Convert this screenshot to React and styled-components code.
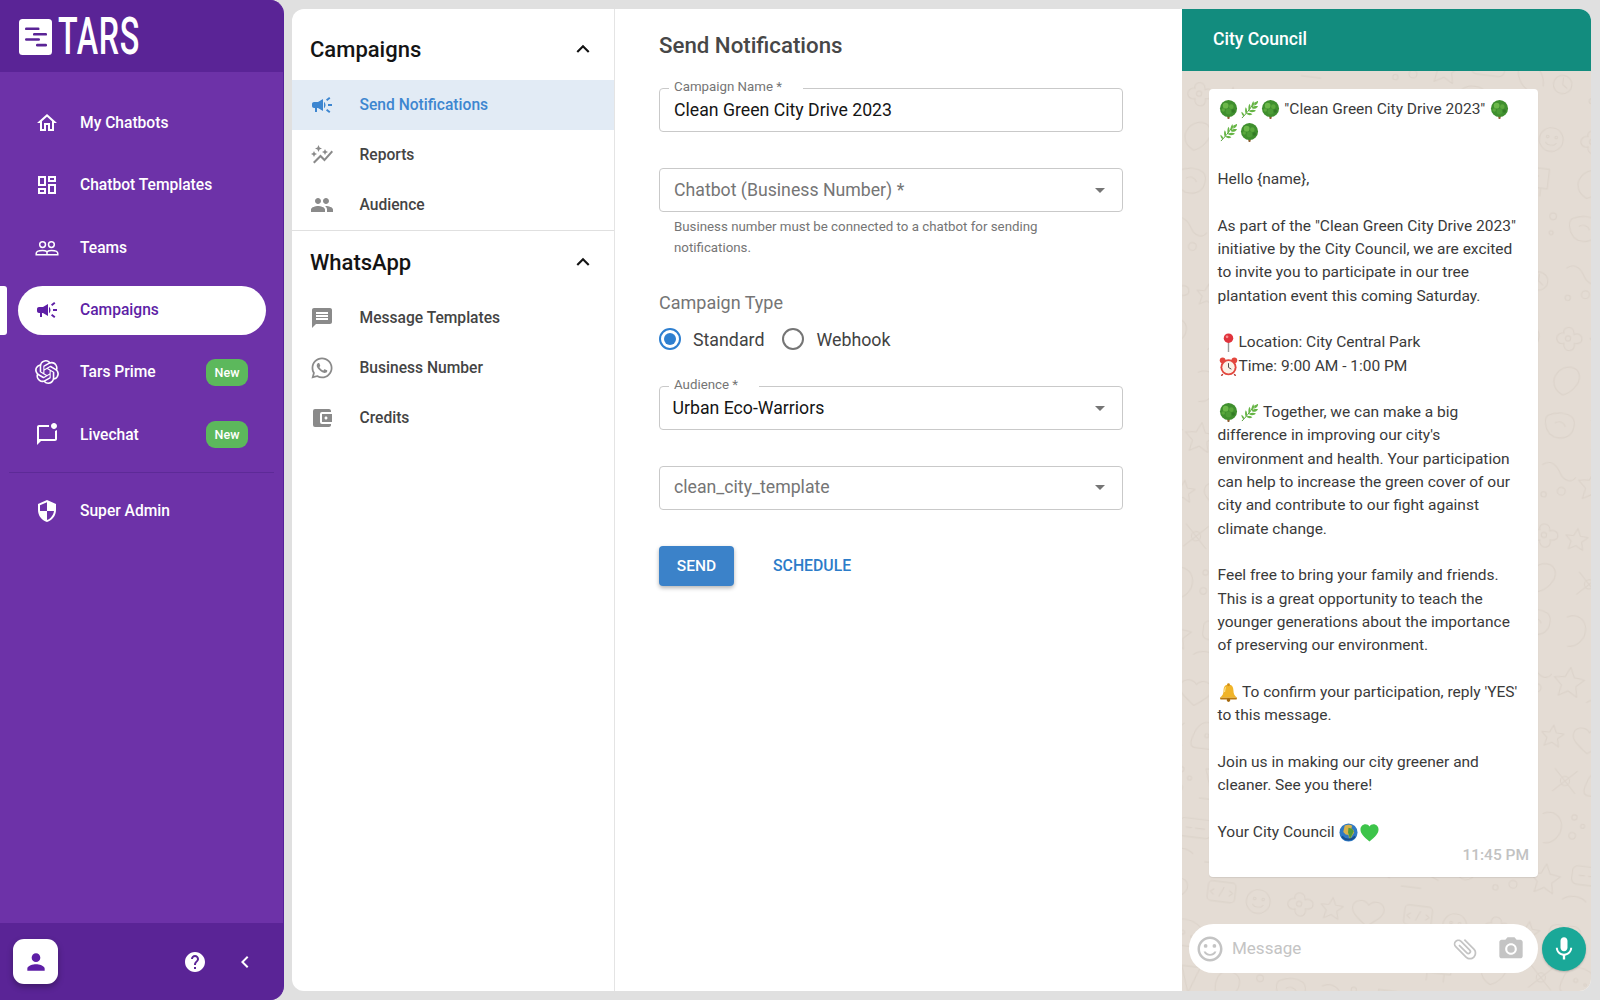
import React from "react";
import styled, { createGlobalStyle } from "styled-components";
import {
  MdOutlineHome, MdOutlineDashboard, MdCampaign, MdOutlineMarkChatUnread, MdSecurity,
  MdPerson, MdHelp, MdChevronLeft, MdAutoGraph, MdPeople, MdMessage,
  MdAccountBalanceWallet, MdExpandLess, MdArrowDropDown, MdOutlineSentimentSatisfiedAlt,
  MdAttachFile, MdPhotoCamera, MdMic,
} from "react-icons/md";
import { SiOpenai } from "react-icons/si";
import { FaWhatsapp } from "react-icons/fa";

const Global = createGlobalStyle`
  html, body { margin: 0; padding: 0; background: #e0e0e0; }
  body { font-family: Roboto, "Liberation Sans", sans-serif; overflow: hidden; }
  * { box-sizing: border-box; }
`;

const Page = styled.div`
  display: flex;
  width: 1600px;
  height: 1000px;
  background: #e0e0e0;
`;

/* ---------- Left sidebar ---------- */
const Sidebar = styled.aside`
  width: 284px;
  flex: none;
  display: flex;
  flex-direction: column;
  background: #6d32a8;
  border-right: 1px solid #56209a;
  border-radius: 0 14px 14px 0;
  overflow: hidden;
`;
const LogoBar = styled.div`
  height: 72px;
  flex: none;
  background: #5a2496;
  display: flex;
  align-items: center;
  padding: 1px 0 0 19px;
  gap: 6px;
`;
const LogoWord = styled.span`
  display: inline-block;
  color: #fff;
  font-size: 52px;
  font-weight: 500;
  line-height: 71px;
  letter-spacing: 1px;
  transform: scaleX(0.62);
  transform-origin: left center;
`;
const Nav = styled.nav`
  flex: 1;
  display: flex;
  flex-direction: column;
  gap: 13.3px;
  padding-top: 26.7px;
`;
const NavRow = styled.a`
  position: relative;
  display: flex;
  align-items: center;
  flex: none;
  height: 49px;
  width: 248px;
  margin-left: 18px;
  padding: 0 18px 0 17px;
  gap: 21px;
  border-radius: 25px;
  font-size: 15.6px;
  font-weight: 500;
  color: ${(p) => (p.$active ? "#5e1fa6" : "#fff")};
  background: ${(p) => (p.$active ? "#fff" : "transparent")};
  svg { flex: none; }
`;
const ActiveMark = styled.span`
  position: absolute;
  left: -18px;
  top: 0;
  width: 7px;
  height: 49px;
  background: #fff;
  border-radius: 0 3px 3px 0;
`;
const NewBadge = styled.span`
  margin-left: auto;
  width: 42px;
  height: 27px;
  border-radius: 9px;
  background: #5cb85c;
  color: #fff;
  font-size: 12.5px;
  font-weight: 500;
  display: flex;
  align-items: center;
  justify-content: center;
`;
const NavDivider = styled.hr`
  width: 265px;
  margin: 0 0 0 9px;
  border: 0;
  border-top: 1px solid #5d2a97;
`;
const SideFooter = styled.div`
  height: 77px;
  flex: none;
  background: #5a2496;
  display: flex;
  align-items: center;
  padding: 0 26px 0 13px;
`;
const AvatarButton = styled.div`
  width: 45px;
  height: 45px;
  border-radius: 11px;
  background: #fff;
  color: #5e1fa6;
  display: flex;
  align-items: center;
  justify-content: center;
  box-shadow: 0 3px 6px rgba(0, 0, 0, 0.3);
  margin-right: auto;
`;
const FooterIcons = styled.div`
  display: flex;
  align-items: center;
  gap: 26px;
  color: #fff;
`;

/* ---------- Main panel ---------- */
const Panel = styled.main`
  flex: none;
  width: 1299px;
  height: 982px;
  margin: 9px 0 0 8px;
  background: #fff;
  border-radius: 12px;
  display: flex;
  overflow: hidden;
`;

const SubNav = styled.div`
  width: 323px;
  flex: none;
  padding-top: 9px;
  border-right: 1px solid #e4e4e4;
`;
const SectionHead = styled.div`
  height: 62px;
  display: flex;
  align-items: center;
  justify-content: space-between;
  padding: 0 18px;
  font-size: 22px;
  font-weight: 500;
  color: #141414;
`;
const SubRow = styled.a`
  height: 50px;
  display: flex;
  align-items: center;
  gap: 25.5px;
  padding-left: 18px;
  font-size: 15.6px;
  font-weight: 500;
  color: ${(p) => (p.$active ? "#3d86d0" : "#444")};
  background: ${(p) => (p.$active ? "#e2ebf5" : "transparent")};
  svg { flex: none; color: ${(p) => (p.$active ? "#3d86d0" : "#8a8a8a")}; }
`;
const SubDivider = styled.hr`
  margin: 0;
  border: 0;
  border-top: 1px solid #e0e0e0;
`;

const Form = styled.section`
  width: 567px;
  flex: none;
  padding: 20.5px 0 0 44px;
`;
const Title = styled.h1`
  margin: 0 0 28.5px;
  font-size: 22.25px;
  line-height: 30px;
  font-weight: 500;
  color: #474747;
`;
const Field = styled.div`
  position: relative;
  width: 464px;
  height: 44px;
  margin-bottom: 36px;
  border: 1.5px solid #c9c9c9;
  border-radius: 4px;
  display: flex;
  align-items: center;
  justify-content: space-between;
  padding: 0 10px ${(p) => p.$lift ?? 0}px ${(p) => p.$pl ?? 14}px;
  font-size: 17.7px;
  color: ${(p) => (p.$muted ? "#757575" : "#151515")};
  svg { color: #757575; flex: none; }
`;
const FloatLabel = styled.label`
  position: absolute;
  top: -10px;
  left: 9px;
  padding: 0 21px 0 5px;
  background: #fff;
  font-size: 13.3px;
  line-height: 15px;
  color: #757575;
`;
const Helper = styled.p`
  width: 400px;
  margin: -32.5px 0 0 15px;
  font-size: 13.3px;
  line-height: 21px;
  color: #757575;
`;
const GroupLabel = styled.div`
  margin-top: 33.5px;
  font-size: 18px;
  line-height: 24px;
  color: #757575;
`;
const RadioRow = styled.div`
  display: flex;
  align-items: center;
  height: 30px;
  margin: 9px 0 32px;
`;
const RadioCircle = styled.span`
  width: 22px;
  height: 22px;
  flex: none;
  border-radius: 50%;
  border: 2px solid ${(p) => (p.$on ? "#2e7fd0" : "#757575")};
  display: flex;
  align-items: center;
  justify-content: center;
  &::after {
    content: "";
    width: 12px;
    height: 12px;
    border-radius: 50%;
    background: ${(p) => (p.$on ? "#2e7fd0" : "transparent")};
  }
`;
const RadioText = styled.span`
  margin: 0 18px 0 12px;
  font-size: 17.8px;
  color: #424242;
`;
const Actions = styled.div`
  display: flex;
  align-items: center;
  gap: 39px;
`;
const SendButton = styled.button`
  width: 75px;
  height: 40px;
  border: 0;
  border-radius: 4px;
  background: #3b82c9;
  color: #fff;
  font: 500 15.5px Roboto, sans-serif;
  box-shadow: 0 2px 4px rgba(0, 0, 0, 0.3);
`;
const TextButton = styled.button`
  border: 0;
  padding: 0 0 2px;
  background: none;
  color: #2b7cc9;
  font: 500 15.8px Roboto, sans-serif;
`;

/* ---------- Chat preview ---------- */
const Chat = styled.aside`
  flex: 1;
  display: flex;
  flex-direction: column;
`;
const ChatHead = styled.header`
  height: 62px;
  flex: none;
  background: #128c7e;
  color: #fff;
  display: flex;
  align-items: center;
  padding: 0 0 3px 31px;
  font-size: 17.6px;
  font-weight: 500;
`;
const ChatBody = styled.div`
  position: relative;
  flex: 1;
  background: #e4dcd4;
  display: flex;
  flex-direction: column;
  justify-content: space-between;
  padding: 18px 5px 18px 7px;
  overflow: hidden;
`;
const Wallpaper = styled.svg`
  position: absolute;
  inset: 0;
  width: 100%;
  height: 100%;
`;
const Bubble = styled.div`
  position: relative;
  width: 329px;
  margin-left: 20px;
  padding: 8.9px 12px 9.1px 8.5px;
  background: #fff;
  border-radius: 4px;
  box-shadow: 0 1px 1px rgba(0, 0, 0, 0.08);
  font-size: 15.5px;
  line-height: 23.33px;
  color: #3a3a3a;
`;
const Para = styled.p`
  margin: 0 0 23.33px;
  svg { vertical-align: top; margin: 2px 1px 0; }
`;
const Stamp = styled.div`
  margin: -23.33px -3px 0 0;
  text-align: right;
  font-size: 15.5px;
  font-weight: 500;
  color: #c2c2c2;
`;
const Composer = styled.div`
  position: relative;
  display: flex;
  align-items: center;
  gap: 4px;
`;
const MessageBox = styled.div`
  flex: 1;
  height: 49px;
  display: flex;
  align-items: center;
  padding: 0 13px 0 6px;
  background: #fff;
  border-radius: 25px;
  color: #c4c4c4;
  font-size: 17px;
  svg { flex: none; }
`;
const Placeholder = styled.span`
  margin: 0 auto 2px 7px;
`;
const ClipIcon = styled(MdAttachFile)`
  transform: rotate(-45deg);
  margin-right: 18px;
`;
const MicButton = styled.div`
  width: 44px;
  height: 44px;
  flex: none;
  border-radius: 50%;
  background: #1aa898;
  color: #fff;
  display: flex;
  align-items: center;
  justify-content: center;
  box-shadow: 0 1px 2px rgba(0, 0, 0, 0.2);
`;

/* ---------- Drawings ---------- */
const LogoMark = () => (
  <svg width="33" height="36" viewBox="0 0 33 36">
    <rect width="33" height="36" rx="3.5" fill="#fff" />
    <g fill="#5a2496">
      <rect x="6" y="8.5" width="14.5" height="2.6" rx="1.2" />
      <rect x="14" y="14" width="14" height="2.6" rx="1.2" />
      <rect x="6" y="19.2" width="15" height="2.6" rx="1.2" />
      <rect x="17" y="24.8" width="11" height="2.6" rx="1.2" />
    </g>
  </svg>
);
const TeamsIcon = ({ size = 24 }) => (
  <svg width={size} height={size} viewBox="0 0 24 24" fill="none" stroke="currentColor" strokeWidth="1.5">
    <circle cx="7.6" cy="8.6" r="2.9" />
    <circle cx="16.4" cy="8.6" r="2.9" />
    <path d="M1.2 18.8v-1.2c0-2 3.2-3.1 6.2-3.1 2 0 3.6.5 4.6 1.2 1-.7 2.6-1.2 4.6-1.2 3 0 6.2 1.1 6.2 3.1v1.2z" />
    <path d="M12 15.6v3" />
  </svg>
);

const Emoji = ({ kind }) => {
  const s = 19;
  if (kind === "tree")
    return (
      <svg width={s} height={s} viewBox="0 0 20 20">
        <rect x="8.8" y="14" width="2.4" height="6" rx="1" fill="#8a5a2b" />
        <circle cx="10" cy="9" r="9" fill="#3f8f2e" />
        <circle cx="7" cy="6" r="3" fill="#6cb84a" />
        <circle cx="13" cy="7" r="2.4" fill="#5aa83c" />
        <circle cx="10" cy="12" r="3" fill="#4c9c36" />
        <circle cx="4.5" cy="10.5" r="1.8" fill="#5aa83c" />
        <circle cx="15" cy="11.5" r="1.8" fill="#337a25" />
      </svg>
    );
  if (kind === "herb")
    return (
      <svg width={s} height={s} viewBox="0 0 20 20">
        <path d="M2 19C6 15 10 10 15 3" stroke="#4f9a34" strokeWidth="1" fill="none" />
        <g fill="#66b545">
          <path d="M15 3c2-1.5 3.5-2 4-2 0 2-1 4-4 5z" />
          <path d="M12 7c0-2.5 1-4.5 2-6 1 2 1 5-1 7z" />
          <path d="M12.5 7.5c2.500-1.500 4.500-1.500 6.500-1-1 2-4 3.500-6 2.500z" />
          <path d="M9 10.500c-.5-2.500 0-5 1-6.500 1.500 2 1.500 5-.2 7.500z" />
          <path d="M9.800 11c2.500-1 5-1 7 0-1.500 1.800-4.500 2.500-7 1z" />
          <path d="M6 14c-1-2-.8-4.500 0-6.500 1.500 1.500 2 4.500.8 7z" />
          <path d="M7 14.200c2-.8 4.500-.6 6 .8-1.800 1.300-4.200 1.300-6-.2z" />
          <path d="M3.500 16.800c-1.300-1-2-2.800-2-4.500 1.800.6 3 2.500 2.800 4.400z" />
        </g>
      </svg>
    );
  if (kind === "pin")
    return (
      <svg width={s} height={s} viewBox="0 0 20 20">
        <path d="M10 8v12" stroke="#9a9a9a" strokeWidth="1.500" />
        <circle cx="10" cy="5.500" r="5" fill="#e0333c" />
        <circle cx="8.500" cy="4" r="1.400" fill="#f58f90" />
      </svg>
    );
  if (kind === "clock")
    return (
      <svg width={s} height={s} viewBox="0 0 20 20">
        <circle cx="3.800" cy="3.500" r="3" fill="#e3473e" />
        <circle cx="16.200" cy="3.500" r="3" fill="#e3473e" />
        <path d="M4 18l-1.500 1.800M16 18l1.500 1.800" stroke="#b5332c" strokeWidth="1.500" />
        <circle cx="10" cy="10.800" r="8.500" fill="#e3473e" />
        <circle cx="10" cy="10.800" r="6.500" fill="#fbf1e6" />
        <path d="M10 6.500v4.500l3 1.800" stroke="#444" strokeWidth="1" fill="none" />
      </svg>
    );
  if (kind === "bell")
    return (
      <svg width={s} height={s} viewBox="0 0 20 20">
        <path d="M10 1.500c-3.800 0-5.200 3-5.200 6.500 0 3.500-1.300 5.700-3.800 7.500h18c-2.500-1.800-3.800-4-3.800-7.500 0-3.500-1.400-6.500-5.200-6.500z" fill="#f0b429" />
        <path d="M7 4.500c-1 1.500-1 3.500-1.200 5" stroke="#fbe08a" strokeWidth="1.300" fill="none" />
        <circle cx="10" cy="1.800" r="1.500" fill="#d08e16" />
        <path d="M1 15.500h18l-.5 1.800h-17z" fill="#b9780f" />
        <circle cx="10" cy="18" r="1.900" fill="#a5690d" />
      </svg>
    );
  if (kind === "globe")
    return (
      <svg width={s} height={s} viewBox="0 0 20 20">
        <circle cx="10" cy="10" r="9.500" fill="#2f79c4" />
        <path d="M6 2.500c3-1 6-1 8 .5l-1 2.500 2 1.500 1 3-2.500 4-1.500 3-1.500-1-.5-3.500-3-.5-2.500-2.500L5 7z" fill="#d8b24a" />
        <path d="M10 5l4 1 1.500 3-2.500 5-1.500 3-1-4-1-3z" fill="#4f9c3a" />
        <path d="M3 14a9 9 0 0 0 14 0" fill="none" stroke="#174f8d" strokeWidth="2" />
      </svg>
    );
  return (
    <svg width={s} height={s} viewBox="0 0 20 20">
      <path d="M10 19.500C4 14.500.5 11 .5 6.800.5 3.500 3 1.300 5.800 1.300c1.800 0 3.300.9 4.200 2.500.9-1.600 2.400-2.500 4.200-2.500 2.800 0 5.300 2.200 5.300 5.500 0 4.200-3.500 7.700-9.500 12.700z" fill="#3dc44a" />
    </svg>
  );
};

const Doodles = () => (
  <Wallpaper aria-hidden="true">
    <defs>
      <pattern id="wa" width="300" height="300" patternUnits="userSpaceOnUse" patternTransform="rotate(7) scale(0.66)">
        <g fill="none" stroke="#dcd3ca" strokeWidth="1.800" strokeLinejoin="round" strokeLinecap="round">
          <path d="M30 14c6 0 8 6 8 10 4-3 12-2 13 5s-7 9-11 8c2 4 1 11-6 12s-10-6-9-10c-4 2-11 1-12-6s6-10 10-9c-2-4 0-10 7-10z" />
          <circle cx="30" cy="31" r="4" />
          <path d="M80 15l5 11 12 1-9 8 3 12-11-6-11 6 3-12-9-8 12-1z" />
          <path d="M135 20c8-10 24-6 24 6 0 10-14 18-24 26-10-8-24-16-24-26 0-12 16-16 24-6z" />
          <rect x="190" y="12" width="42" height="30" rx="6" />
          <path d="M199 24l-5 4 5 4M223 24l5 4-5 4M214 20l-6 14" />
          <circle cx="268" cy="35" r="18" />
          <circle cx="262" cy="31" r="2" /><circle cx="275" cy="31" r="2" />
          <path d="M260 40c4 5 12 5 16 0" />
          <path d="M20 85c10-15 30-15 34 0 3 12-10 28-22 32-14-6-20-20-12-32z" />
          <path d="M90 80l34 34M124 80l-34 34" />
          <circle cx="107" cy="97" r="7" />
          <path d="M160 75c20 0 36 14 36 32 0 4-2 8-6 8h-46c-6 0-8-6-6-12 3-14 10-28 22-28z" />
          <circle cx="160" cy="95" r="3" /><circle cx="175" cy="100" r="2" />
          <path d="M225 80h46v30h-46zM235 110v12M261 110v12" />
          <path d="M240 92h16" />
          <path d="M14 150c10-6 24-8 36-2 6 4 8 18 0 28-8 8-22 8-30 2-8-8-12-22-6-28z" />
          <path d="M26 160c6-4 14-2 16 4" />
          <path d="M80 150c14-8 28 0 30 14s-8 30-24 30" />
          <circle cx="128" cy="150" r="4" /><circle cx="142" cy="162" r="3" /><circle cx="128" cy="178" r="5" />
          <path d="M165 145l14 40 14-40zM160 190h38" />
          <path d="M225 150c10-10 30-4 30 12 0 18-20 26-30 30-6-12-10-30 0-42z" />
          <circle cx="285" cy="150" r="5" /><circle cx="285" cy="175" r="3" />
          <path d="M15 225c12-10 22 0 28 10s18 14 24 4" />
          <circle cx="22" cy="270" r="4" /><circle cx="48" cy="262" r="6" />
          <path d="M95 225l7 15 16 2-12 11 3 16-14-8-14 8 3-16-12-11 16-2z" />
          <rect x="135" y="222" width="50" height="28" rx="8" />
          <path d="M146 236h8M160 236h14" />
          <path d="M205 230c0 20 10 34 30 40M220 222c16 4 26 18 26 34" />
          <circle cx="275" cy="250" r="14" />
          <path d="M275 240v10l7 5" />
          <path d="M125 275c10-8 26-8 36 0M180 285h30" />
        </g>
      </pattern>
    </defs>
    <rect width="100%" height="100%" fill="url(#wa)" />
  </Wallpaper>
);

const mainNav = [
  { label: "My Chatbots", icon: <MdOutlineHome size={24} /> },
  { label: "Chatbot Templates", icon: <MdOutlineDashboard size={24} /> },
  { label: "Teams", icon: <TeamsIcon /> },
  { label: "Campaigns", icon: <MdCampaign size={24} />, active: true },
  { label: "Tars Prime", icon: <SiOpenai size={24} />, badge: true },
  { label: "Livechat", icon: <MdOutlineMarkChatUnread size={24} />, badge: true },
];

const Item = ({ item }) => (
  <NavRow $active={item.active}>
    {item.active && <ActiveMark />}
    {item.icon}
    {item.label}
    {item.badge && <NewBadge>New</NewBadge>}
  </NavRow>
);

export default function App() {
  return (
    <Page>
      <Global />
      <Sidebar>
        <LogoBar>
          <LogoMark />
          <LogoWord>TARS</LogoWord>
        </LogoBar>
        <Nav>
          {mainNav.map((item) => (
            <Item key={item.label} item={item} />
          ))}
          <NavDivider />
          <Item item={{ label: "Super Admin", icon: <MdSecurity size={24} /> }} />
        </Nav>
        <SideFooter>
          <AvatarButton><MdPerson size={26} /></AvatarButton>
          <FooterIcons>
            <MdHelp size={24} />
            <MdChevronLeft size={24} />
          </FooterIcons>
        </SideFooter>
      </Sidebar>

      <Panel>
        <SubNav>
          <SectionHead>Campaigns <MdExpandLess size={26} /></SectionHead>
          <SubRow $active><MdCampaign size={24} />Send Notifications</SubRow>
          <SubRow><MdAutoGraph size={24} />Reports</SubRow>
          <SubRow><MdPeople size={24} />Audience</SubRow>
          <SubDivider />
          <SectionHead>WhatsApp <MdExpandLess size={26} /></SectionHead>
          <SubRow><MdMessage size={24} />Message Templates</SubRow>
          <SubRow><FaWhatsapp size={24} />Business Number</SubRow>
          <SubRow><MdAccountBalanceWallet size={24} />Credits</SubRow>
        </SubNav>

        <Form>
          <Title>Send Notifications</Title>
          <Field>
            <FloatLabel>Campaign Name *</FloatLabel>
            Clean Green City Drive 2023
          </Field>
          <Field $muted $lift={1}>
            Chatbot (Business Number) *
            <MdArrowDropDown size={24} />
          </Field>
          <Helper>Business number must be connected to a chatbot for sending notifications.</Helper>
          <GroupLabel>Campaign Type</GroupLabel>
          <RadioRow>
            <RadioCircle $on />
            <RadioText>Standard</RadioText>
            <RadioCircle />
            <RadioText>Webhook</RadioText>
          </RadioRow>
          <Field $pl={12.5} $lift={1}>
            <FloatLabel>Audience *</FloatLabel>
            Urban Eco-Warriors
            <MdArrowDropDown size={24} />
          </Field>
          <Field $muted $lift={2}>
            clean_city_template
            <MdArrowDropDown size={24} />
          </Field>
          <Actions>
            <SendButton>SEND</SendButton>
            <TextButton>SCHEDULE</TextButton>
          </Actions>
        </Form>

        <Chat>
          <ChatHead>City Council</ChatHead>
          <ChatBody>
            <Doodles />
            <Bubble>
              <Para><Emoji kind="tree" /><Emoji kind="herb" /><Emoji kind="tree" /> "Clean Green City Drive 2023" <Emoji kind="tree" /> <Emoji kind="herb" /><Emoji kind="tree" /></Para>
              <Para>Hello {"{name}"},</Para>
              <Para>As part of the "Clean Green City Drive 2023" initiative by the City Council, we are excited to invite you to participate in our tree plantation event this coming Saturday.</Para>
              <Para><Emoji kind="pin" />Location: City Central Park<br /><Emoji kind="clock" />Time: 9:00 AM - 1:00 PM</Para>
              <Para><Emoji kind="tree" /><Emoji kind="herb" /> Together, we can make a big difference in improving our city's environment and health. Your participation can help to increase the green cover of our city and contribute to our fight against climate change.</Para>
              <Para>Feel free to bring your family and friends. This is a great opportunity to teach the younger generations about the importance of preserving our environment.</Para>
              <Para><Emoji kind="bell" /> To confirm your participation, reply 'YES' to this message.</Para>
              <Para>Join us in making our city greener and cleaner. See you there!</Para>
              <Para>Your City Council <Emoji kind="globe" /><Emoji kind="heart" /></Para>
              <Stamp>11:45 PM</Stamp>
            </Bubble>
            <Composer>
              <MessageBox>
                <MdOutlineSentimentSatisfiedAlt size={30} />
                <Placeholder>Message</Placeholder>
                <ClipIcon size={28} />
                <MdPhotoCamera size={28} />
              </MessageBox>
              <MicButton><MdMic size={28} /></MicButton>
            </Composer>
          </ChatBody>
        </Chat>
      </Panel>
    </Page>
  );
}
